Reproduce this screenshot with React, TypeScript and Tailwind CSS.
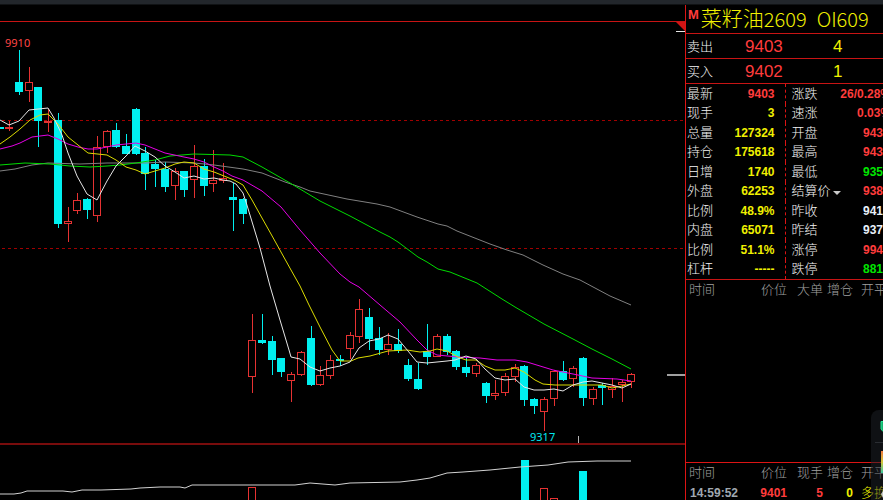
import { clsx } from 'clsx';

type Tone = 'red' | 'yellow' | 'green' | 'white' | 'gray';

const tones: Record<Tone, string> = {
  red: 'text-[#ff3c3c]',
  yellow: 'text-[#f0f000]',
  green: 'text-[#00e600]',
  white: 'text-[#e8f0f8]',
  gray: 'text-[#a0a8b0]'
};

// direction, high, body top, body bottom, low
type Candle = ['u' | 'd', number, number, number, number];

const candles: Candle[] = [
  ['d', 127, 127, 129, 129],
  ['u', 121, 127, 128, 131],
  ['d', 50, 82, 92, 95],
  ['u', 67, 82, 90, 102],
  ['d', 87, 87, 121, 147],
  ['u', 109, 121, 122, 132],
  ['d', 113, 120, 224, 228],
  ['u', 207, 221, 223, 242],
  ['u', 193, 200, 210, 214],
  ['d', 198, 199, 210, 219],
  ['u', 136, 147, 215, 222],
  ['u', 130, 131, 146, 153],
  ['d', 123, 130, 147, 148],
  ['d', 134, 146, 154, 154],
  ['d', 108, 109, 154, 155],
  ['d', 147, 153, 174, 190],
  ['d', 160, 164, 169, 187],
  ['d', 162, 169, 187, 192],
  ['u', 168, 171, 185, 200],
  ['d', 171, 171, 190, 197],
  ['u', 145, 166, 179, 198],
  ['d', 159, 166, 186, 196],
  ['u', 150, 180, 183, 192],
  ['u', 163, 178, 180, 183],
  ['d', 183, 197, 200, 231],
  ['d', 198, 199, 214, 224],
  ['u', 314, 340, 376, 393],
  ['d', 314, 340, 343, 344],
  ['d', 336, 341, 360, 375],
  ['d', 358, 358, 372, 377],
  ['u', 372, 374, 380, 402],
  ['u', 351, 352, 374, 376],
  ['d', 326, 338, 385, 386],
  ['u', 366, 375, 384, 386],
  ['u', 355, 360, 375, 379],
  ['d', 355, 359, 361, 366],
  ['u', 332, 335, 348, 359],
  ['u', 299, 309, 336, 343],
  ['d', 308, 317, 339, 350],
  ['d', 327, 338, 350, 355],
  ['u', 333, 344, 349, 355],
  ['d', 329, 344, 351, 353],
  ['d', 359, 365, 379, 381],
  ['d', 363, 379, 389, 390],
  ['d', 324, 351, 357, 365],
  ['u', 334, 336, 356, 357],
  ['d', 334, 336, 352, 355],
  ['d', 350, 351, 367, 370],
  ['d', 357, 367, 373, 377],
  ['u', 363, 365, 373, 377],
  ['d', 382, 383, 396, 403],
  ['u', 380, 393, 395, 400],
  ['u', 373, 376, 392, 396],
  ['u', 364, 367, 376, 382],
  ['d', 365, 366, 400, 406],
  ['d', 398, 399, 406, 414],
  ['u', 397, 399, 411, 431],
  ['u', 370, 371, 398, 406],
  ['d', 361, 371, 380, 381],
  ['u', 366, 368, 378, 387],
  ['d', 357, 358, 398, 406],
  ['u', 387, 389, 398, 405],
  ['d', 383, 385, 388, 405],
  ['u', 378, 386, 389, 398],
  ['u', 380, 382, 384, 402],
  ['u', 373, 374, 381, 388]
];

const averages = [
  {
    name: 'MA60',
    color: '#808080',
    points:
      '0,171 15,169 32,165 48,163 80,164 107,163 145,163 165,162 194,163 214,165 243,169 262,173 285,182 300,187 310,191 347,199 377,204 390,207 417,217 438,224 447,226 457,231 490,244 507,250 523,255 543,265 563,274 580,280 610,296 631,305'
  },
  {
    name: 'MA40',
    color: '#00dc00',
    points:
      '0,165 25,163 50,164 70,166 90,167 107,166 120,165 136,163 155,160 170,156 194,154 230,155 243,157 262,167 290,183 320,201 350,216 380,232 390,237 398,242 418,257 427,262 438,269 450,272 477,283 502,299 515,307 544,324 573,339 592,349 612,359 631,369'
  },
  {
    name: 'MA20',
    color: '#e600e6',
    points:
      '0,149 12,146 20,143 32,137 48,135 58,139 68,144 78,147 88,149 97,149 107,147 116,145 136,143 145,145 155,149 165,153 184,157 194,159 204,162 214,167 223,171 232,176 243,180 262,191 281,207 300,230 320,253 340,274 350,282 359,287 380,305 400,322 417,340 427,350 437,355 458,357 480,358 497,360 515,360 527,362 540,366 553,370 573,374 592,378 617,379 631,381'
  },
  {
    name: 'MA10',
    color: '#dcdc00',
    points:
      '0,144 10,137 20,129 30,120 40,115 48,114 58,124 68,137 78,145 88,153 107,155 116,160 126,167 136,170 145,174 155,171 165,168 175,164 184,162 194,163 204,169 214,172 224,176 234,180 243,185 252,200 262,218 271,234 281,252 291,270 300,286 309,305 320,327 332,350 340,361 351,361 358,358 370,356 388,351 407,350 420,352 430,351 437,349 447,351 458,357 466,360 476,360 485,366 495,370 505,370 515,368 524,372 535,380 543,384 555,385 602,385 612,388 622,386 631,384'
  },
  {
    name: 'MA5',
    color: '#e6e6e6',
    points:
      '0,120 9,125 19,121 29,110 48,108 54,118 62,135 68,153 77,176 87,194 97,200 107,181 116,166 126,156 135,146 145,151 155,157 165,166 175,172 184,178 194,176 204,179 214,178 223,180 230,181 236,184 243,193 246,202 260,248 270,286 280,320 289,350 291,357 300,359 310,367 320,371 330,368 340,366 350,362 359,348 369,341 379,339 388,335 398,339 408,351 417,362 427,363 437,362 447,361 455,360 466,356 476,359 485,369 495,378 505,380 515,379 524,387 534,390 544,390 554,389 563,391 573,385 583,382 592,381 602,383 612,385 622,388 631,384'
  }
];

const openInterest =
  '0,494 14,494 21,493 27,491 63,491 72,492 82,490 101,490 131,489 140,488 160,487 180,487 185,488 192,485 295,485 310,483 335,485 350,483 400,482 417,480 430,478 447,473 463,472 490,470 520,467 548,465 568,462 597,461 631,461';

const volumes = [
  { x: 252, top: 487, up: true },
  { x: 525, top: 460, up: false },
  { x: 544, top: 488, up: true },
  { x: 554, top: 498, up: true },
  { x: 583, top: 471, up: false }
];

const quotes: [string, string, Tone, string, string, Tone][] = [
  ['最新', '9403', 'red', '涨跌', '26/0.28%', 'red'],
  ['现手', '3', 'yellow', '速涨', '0.03%', 'red'],
  ['总量', '127324', 'yellow', '开盘', '943', 'red'],
  ['持仓', '175618', 'yellow', '最高', '943', 'red'],
  ['日增', '1740', 'yellow', '最低', '935', 'green'],
  ['外盘', '62253', 'yellow', '结算价', '938', 'red'],
  ['比例', '48.9%', 'yellow', '昨收', '941', 'white'],
  ['内盘', '65071', 'yellow', '昨结', '937', 'white'],
  ['比例', '51.1%', 'yellow', '涨停', '994', 'red'],
  ['杠杆', '-----', 'yellow', '跌停', '881', 'green']
];

const PriceChart = () => (
  <svg viewBox="0 22 685 421" className="block w-full" role="img" aria-label="K线">
    <g stroke="#a00000" strokeDasharray="3 3" shapeRendering="crispEdges">
      <line x1="2" x2="685" y1="120.5" y2="120.5" />
      <line x1="2" x2="685" y1="248.5" y2="248.5" />
    </g>
    <g shapeRendering="crispEdges">
      {candles.map(([dir, high, top, bottom, low], i) => {
        const x = Math.round(9.3 + 9.72 * (i - 1));
        return dir === 'd' ? (
          <g key={i} fill="#00f0f0">
            <rect x={x} y={high} width="1" height={low - high} />
            <rect x={x - 4} y={top} width="8" height={bottom - top} />
          </g>
        ) : (
          <g key={i} stroke="#e63232" fill="none">
            <path d={`M${x + 0.5} ${high}V${top}M${x + 0.5} ${bottom}V${low}`} />
            <rect x={x - 3.5} y={top + 0.5} width="7" height={bottom - top} />
          </g>
        );
      })}
    </g>
    {averages.map((line) => (
      <polyline key={line.name} points={line.points} fill="none" stroke={line.color} />
    ))}
    <path d="M676 22H685V31Z" fill="#d21414" />
    <path d="M676 31.5H685" stroke="#e6e6e6" />
    <path d="M667 375H685" stroke="#a0a0a0" strokeWidth="2" />
    <path d="M578.5 436V443" stroke="#b4b4b4" />
    <g fontFamily="'Noto Sans', sans-serif" fontSize="11">
      <text x="5" y="47" fill="#ff4646">9910</text>
      <text x="530" y="441" fill="#00e6f0">9317</text>
    </g>
  </svg>
);

const VolumeChart = () => (
  <svg viewBox="0 445 685 55" className="block w-full" role="img" aria-label="成交量">
    <g shapeRendering="crispEdges">
      {volumes.map(({ x, top, up }) =>
        up ? (
          <rect key={x} x={x - 3.5} y={top + 0.5} width="7" height="40" fill="none" stroke="#e63232" />
        ) : (
          <rect key={x} x={x - 4} y={top} width="8" height="40" fill="#00f0f0" />
        )
      )}
    </g>
    <polyline points={openInterest} fill="none" stroke="#d2d2d2" />
  </svg>
);

const PriceRow = ({ label, price, lots }: { label: string; price: string; lots: string }) => (
  <div className="flex h-[25px] items-center border-b border-[#c81414] pt-0.5 pl-px">
    <span className="w-[58px] text-[13px] font-light text-[#f5f5f5]">{label}</span>
    <span className="w-[88px] text-[17px] text-[#ff3c3c]">{price}</span>
    <span className="text-[17px] text-[#f0f000]">{lots}</span>
  </div>
);

const TradeHead = ({ volume }: { volume: string }) => (
  <thead>
    <tr className="h-5 text-[13px] text-[#a0a0a0]">
      <th className="w-[71px] pl-[3px] text-left font-light">时间</th>
      <th className="w-[30px] text-right font-light">价位</th>
      <th className="w-9 text-right font-light">{volume}</th>
      <th className="w-[30px] text-right font-light">增仓</th>
      <th className="pl-2 text-left font-light">开平</th>
    </tr>
  </thead>
);

const tableClass = 'w-full table-fixed whitespace-nowrap leading-5';

const QuotePanel = () => (
  <aside className="flex w-[198px] shrink-0 flex-col overflow-hidden border-l border-[#dc1414]">
    <h1 className="flex h-[29px] items-center border-b border-[#c81414] pl-0.5 font-light whitespace-nowrap text-[#f0f000]">
      <span className="self-start text-[13px] leading-5 font-bold text-[#ff3c3c]">M</span>
      <span className="pl-0.5 text-[21px]">菜籽油</span>
      <span className="font-['Noto_Sans_CJK_SC'] text-[20px]">2609</span>
      <span className="pl-2.5 font-['Noto_Sans_CJK_SC'] text-[20px]">OI609</span>
    </h1>
    <PriceRow label="卖出" price="9403" lots="4" />
    <PriceRow label="买入" price="9402" lots="1" />

    <div className="border-b border-[#c81414]">
      <table className="h-[195px] w-full table-fixed text-[13px] leading-4 whitespace-nowrap">
        <tbody>
          {quotes.map(([label, value, tone, label2, value2, tone2]) => (
            <tr key={label2}>
              <th className="w-9 pl-px text-left font-light text-[#f5f5f5]">{label}</th>
              <td className={clsx('w-[63px] border-r border-dashed border-[#dc1414] pr-2.5 text-right text-[12px] font-bold', tones[tone])}>
                {value}
              </td>
              <th className="w-[54px] pl-1.5 text-left font-light text-[#f5f5f5]">
                {label2 === '结算价' ? (
                  <button className="flex items-center gap-0.5">
                    {label2}
                    <svg viewBox="0 0 8 4" className="mt-1 h-1 w-2 shrink-0 fill-[#c8c8c8]">
                      <path d="M0 0H8L4 4Z" />
                    </svg>
                  </button>
                ) : (
                  label2
                )}
              </th>
              <td className={clsx('text-[12px] font-bold', tones[tone2])}>
                <div className={clsx('flex justify-end', value2.endsWith('%') && '-mr-2')}>{value2}</div>
              </td>
            </tr>
          ))}
        </tbody>
      </table>
    </div>

    <table className={tableClass}>
      <TradeHead volume="大单" />
    </table>

    <div className="mt-auto h-[38px] border-t border-[#dc1414]">
      <table className={tableClass}>
        <TradeHead volume="现手" />
        <tbody>
          <tr className="text-[12px] font-bold">
            <td className="pl-1 text-[#a0a8b0]">14:59:52</td>
            <td className="text-right text-[#ff3c3c]">9401</td>
            <td className="text-right text-[#ff3c3c]">5</td>
            <td className="text-right text-[#f0f000]">0</td>
            <td className="pl-2 text-[13px] font-light text-[#f0f000]">多换</td>
          </tr>
        </tbody>
      </table>
    </div>
  </aside>
);

export default function App() {
  return (
    <div className="relative flex h-screen flex-col overflow-hidden bg-black font-['Liberation_Sans','Noto_Sans_CJK_SC',sans-serif]">
      <div className="h-[5px] shrink-0 border-b border-[#101214] bg-[#22262b]" />
      <div className="flex min-h-0 flex-1">
        <main className="min-w-0 flex-1">
          <div className="h-[17px] border-b border-[#c81414]" />
          <PriceChart />
          <div className="h-0.5 bg-[#780c0c]" />
          <VolumeChart />
        </main>
        <QuotePanel />
      </div>

      <div className="absolute right-0 bottom-0 h-[90px] w-3 overflow-hidden rounded-tl-lg bg-[#1e2228]/50">
        <svg viewBox="0 0 12 90" className="h-full w-full">
          <defs>
            <linearGradient id="strip" x1="0" x2="0" y1="0" y2="1">
              <stop offset="0" stopColor="#f0783c" />
              <stop offset="0.5" stopColor="#d2c83c" />
              <stop offset="1" stopColor="#3cc8a0" />
            </linearGradient>
          </defs>
          <path d="M12 11.5H10V19L12 21.5" fill="#14b46e" stroke="#28e696" />
          <path d="M4 32.5H12" stroke="#2a2d32" />
          <rect x="10" y="41" width="2" height="22" fill="url(#strip)" />
          <path d="M10 84L12 81V88Z" fill="#c8c8c8" />
        </svg>
      </div>
    </div>
  );
}
